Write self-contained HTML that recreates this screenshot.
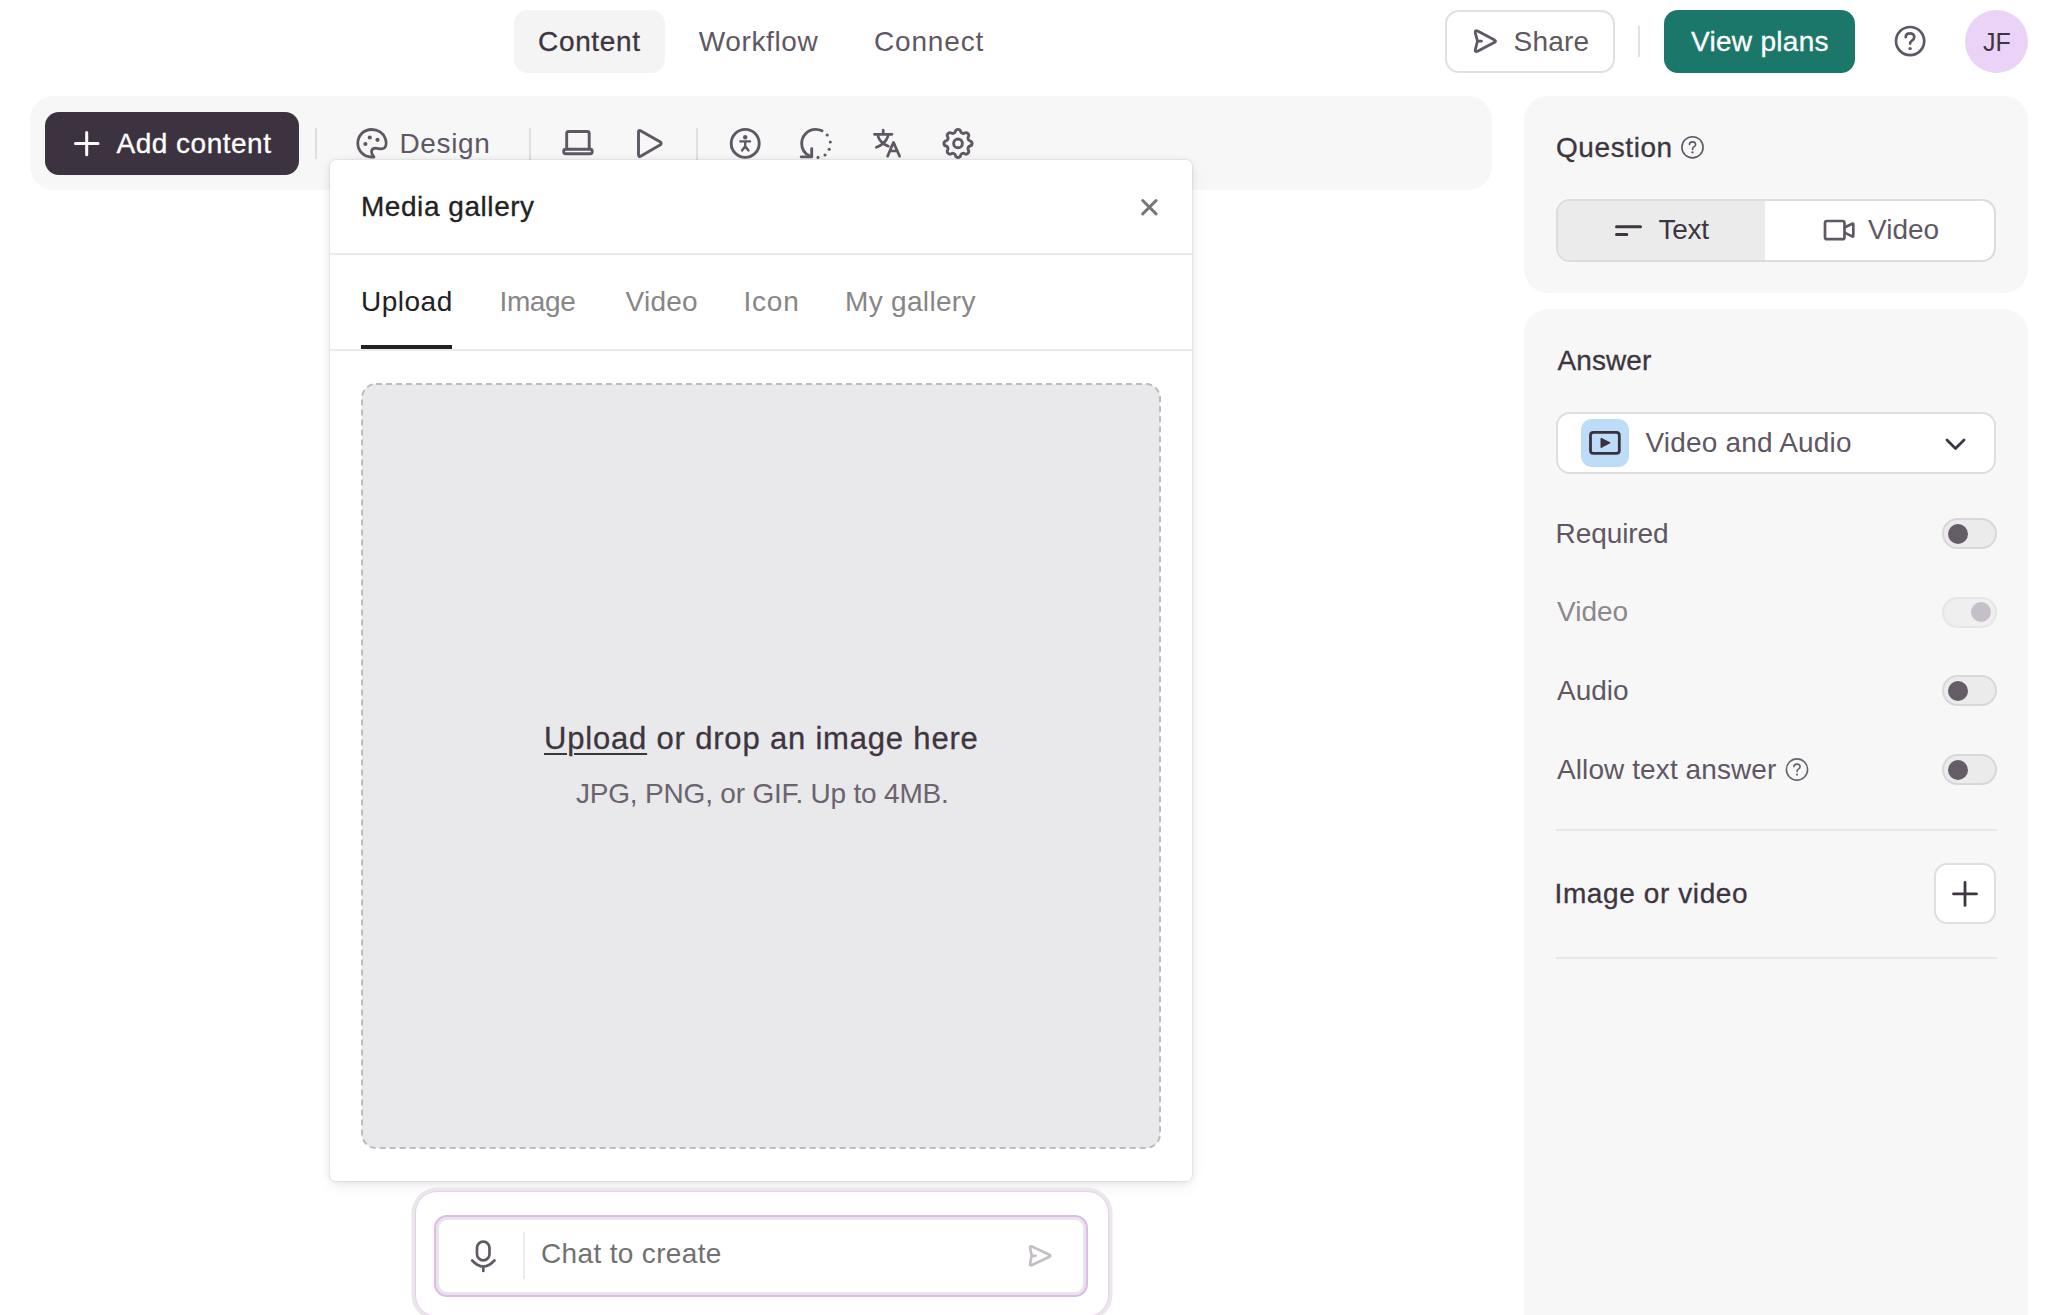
<!DOCTYPE html>
<html><head><meta charset="utf-8"><title>Media gallery</title>
<style>
html,body{margin:0;padding:0;background:#ffffff;}
body{width:2048px;height:1315px;position:relative;overflow:hidden;font-family:"Liberation Sans",sans-serif;}
body>div{position:absolute;}
.t{white-space:nowrap;}
</style></head><body>
<div style="left:514px;top:10px;width:151px;height:63px;background:#f4f4f4;border-radius:14px;"></div>
<div class="t" style="left:538.00px;top:27.59px;font-size:28px;line-height:28px;color:#3d3540;letter-spacing:0.667px;-webkit-text-stroke:0.3px #3d3540;">Content</div>
<div class="t" style="left:698.75px;top:27.59px;font-size:28px;line-height:28px;color:#5f5763;letter-spacing:0.609px;">Workflow</div>
<div class="t" style="left:874.00px;top:27.59px;font-size:28px;line-height:28px;color:#5f5763;letter-spacing:0.833px;">Connect</div>
<div style="left:1444.5px;top:10px;width:170.0px;height:63px;border:2px solid #e2dfe2;border-radius:14px;box-sizing:border-box;background:#fff;"></div>
<div class="t" style="left:1513.50px;top:27.59px;font-size:28px;line-height:28px;color:#5f5763;letter-spacing:0.2px;">Share</div>
<div style="left:1638px;top:25.5px;width:2px;height:31.5px;background:#e2e0e2;"></div>
<div style="left:1664px;top:10px;width:191px;height:63px;background:#1b776a;border-radius:14px;"></div>
<div class="t" style="left:1691.00px;top:27.79px;font-size:28px;line-height:28px;color:#ffffff;letter-spacing:0.3px;-webkit-text-stroke:0.3px #ffffff;">View plans</div>
<div style="left:1965px;top:10px;width:63px;height:63px;background:#ead3f7;border-radius:50%;"></div>
<div class="t" style="left:1983.00px;top:29.83px;font-size:25px;line-height:25px;color:#3d3540;">JF</div>
<div style="left:30px;top:96px;width:1462px;height:94px;background:#f7f7f7;border-radius:24px;"></div>
<div style="left:45px;top:112px;width:254px;height:63px;background:#3d3340;border-radius:14px;"></div>
<div class="t" style="left:116.50px;top:130.49px;font-size:28px;line-height:28px;color:#ffffff;letter-spacing:0.5px;-webkit-text-stroke:0.3px #ffffff;">Add content</div>
<div style="left:315px;top:128px;width:2px;height:31px;background:#e0dee0;"></div>
<div class="t" style="left:399.50px;top:130.49px;font-size:28px;line-height:28px;color:#5f5763;letter-spacing:0.65px;">Design</div>
<div style="left:529px;top:128px;width:2px;height:32px;background:#e0dee0;"></div>
<div style="left:696px;top:128px;width:2px;height:32px;background:#e0dee0;"></div>
<div style="left:1524px;top:96px;width:504px;height:197px;background:#f7f7f7;border-radius:24px;"></div>
<div class="t" style="left:1556.00px;top:134.09px;font-size:28px;line-height:28px;color:#3d3540;letter-spacing:0.586px;-webkit-text-stroke:0.3px #3d3540;">Question</div>
<div style="left:1556px;top:199px;width:440px;height:63px;border:2px solid #dddbdd;border-radius:14px;box-sizing:border-box;background:#fff;overflow:hidden;"></div>
<div style="left:1558px;top:201px;width:207px;height:59px;background:#ebebeb;border-radius:12px 0 0 12px;"></div>
<div class="t" style="left:1658.50px;top:216.09px;font-size:28px;line-height:28px;color:#3d3540;letter-spacing:-0.3px;">Text</div>
<div class="t" style="left:1868.00px;top:216.09px;font-size:28px;line-height:28px;color:#5f5763;">Video</div>
<div style="left:1524px;top:309px;width:504px;height:1031px;background:#f7f7f7;border-radius:24px;"></div>
<div class="t" style="left:1557.50px;top:346.59px;font-size:28px;line-height:28px;color:#3d3540;letter-spacing:0.1px;-webkit-text-stroke:0.3px #3d3540;">Answer</div>
<div style="left:1556px;top:412px;width:440px;height:62px;border:2px solid #dfdddf;border-radius:14px;box-sizing:border-box;background:#fff;"></div>
<div style="left:1581px;top:419px;width:48px;height:48px;background:#bddcf7;border-radius:11px;"></div>
<div class="t" style="left:1645.50px;top:429.19px;font-size:28px;line-height:28px;color:#5f5763;letter-spacing:0.179px;">Video and Audio</div>
<div class="t" style="left:1555.50px;top:519.59px;font-size:28px;line-height:28px;color:#5f5763;letter-spacing:-0.072px;">Required</div>
<div class="t" style="left:1557.00px;top:598.29px;font-size:28px;line-height:28px;color:#8c868e;">Video</div>
<div class="t" style="left:1557.00px;top:677.09px;font-size:28px;line-height:28px;color:#5f5763;">Audio</div>
<div class="t" style="left:1557.00px;top:755.79px;font-size:28px;line-height:28px;color:#5f5763;letter-spacing:0.093px;">Allow text answer</div>
<div style="left:1942px;top:518.0px;width:55px;height:31.0px;background:#ebebeb;border:2px solid #d9d7da;border-radius:16px;box-sizing:border-box;"></div>
<div style="left:1947.5px;top:523.5px;width:20.0px;height:20.0px;background:#645c67;border-radius:50%;"></div>
<div style="left:1942px;top:596.5px;width:55px;height:31.0px;background:#efefef;border:2px solid #e6e5e7;border-radius:16px;box-sizing:border-box;"></div>
<div style="left:1971px;top:602px;width:20px;height:20px;background:#c5c0c7;border-radius:50%;"></div>
<div style="left:1942px;top:675.0px;width:55px;height:31.0px;background:#ebebeb;border:2px solid #d9d7da;border-radius:16px;box-sizing:border-box;"></div>
<div style="left:1947.5px;top:680.5px;width:20.0px;height:20.0px;background:#645c67;border-radius:50%;"></div>
<div style="left:1942px;top:754.2px;width:55px;height:31.0px;background:#ebebeb;border:2px solid #d9d7da;border-radius:16px;box-sizing:border-box;"></div>
<div style="left:1947.5px;top:759.7px;width:20.0px;height:20.0px;background:#645c67;border-radius:50%;"></div>
<div style="left:1556px;top:829px;width:441px;height:2px;background:#e7e7e8;"></div>
<div class="t" style="left:1554.50px;top:879.99px;font-size:28px;line-height:28px;color:#3d3540;letter-spacing:0.607px;-webkit-text-stroke:0.3px #3d3540;">Image or video</div>
<div style="left:1934px;top:863px;width:62px;height:61px;border:2px solid #e0dee0;border-radius:13px;box-sizing:border-box;background:#fff;"></div>
<div style="left:1556px;top:956.5px;width:441px;height:2.0px;background:#e7e7e8;"></div>
<div style="left:330px;top:160px;width:862px;height:1020.5px;background:#fff;border-radius:6px;box-shadow:0 0 0 1px rgba(0,0,0,0.04),0 1px 7px rgba(0,0,0,0.085),0 5px 16px rgba(0,0,0,0.06);"></div>
<div class="t" style="left:361.00px;top:192.59px;font-size:28px;line-height:28px;color:#222222;letter-spacing:0.55px;-webkit-text-stroke:0.3px #222222;">Media gallery</div>
<div style="left:330px;top:253px;width:862px;height:2px;background:#ebebeb;"></div>
<div class="t" style="left:361.00px;top:288.29px;font-size:28px;line-height:28px;color:#222222;letter-spacing:0.5px;">Upload</div>
<div class="t" style="left:499.50px;top:288.29px;font-size:28px;line-height:28px;color:#868686;letter-spacing:-0.375px;">Image</div>
<div class="t" style="left:625.50px;top:288.29px;font-size:28px;line-height:28px;color:#868686;letter-spacing:0.25px;">Video</div>
<div class="t" style="left:743.50px;top:288.29px;font-size:28px;line-height:28px;color:#868686;letter-spacing:0.766px;">Icon</div>
<div class="t" style="left:845.00px;top:288.29px;font-size:28px;line-height:28px;color:#868686;letter-spacing:0.321px;">My gallery</div>
<div style="left:330px;top:349px;width:862px;height:2px;background:#ebebeb;"></div>
<div style="left:361px;top:345px;width:91px;height:4px;background:#222222;"></div>
<svg style="position:absolute;left:361px;top:383px" width="800" height="766"><rect x="1" y="1" width="798" height="764" rx="14" ry="14" fill="#e9e8ea" stroke="#bdbac0" stroke-width="2" stroke-dasharray="6 4"/></svg>
<div class="t" style="left:544.00px;top:723.05px;font-size:31px;line-height:31px;color:#3d3540;letter-spacing:0.813px;-webkit-text-stroke:0.3px #3d3540;"><span style="text-decoration:underline;text-decoration-thickness:2px;text-underline-offset:4px">Upload</span> or drop an image here</div>
<div class="t" style="left:576.00px;top:779.59px;font-size:28px;line-height:28px;color:#6b6470;letter-spacing:-0.194px;">JPG, PNG, or GIF. Up to 4MB.</div>
<div style="left:414.5px;top:1190.5px;width:694.0px;height:126.0px;background:#fff;border-radius:22px;border:1.8px solid #eccbf6;box-sizing:border-box;box-shadow:0 0 0 3.5px #e8e8e8;"></div>
<div style="left:436.2px;top:1217px;width:649.5999999999999px;height:77.79999999999995px;background:#fff;border-radius:11px;border:3.5px solid #e6e6e8;box-sizing:border-box;box-shadow:0 0 0 2px #dfb9ee;"></div>
<div style="left:523px;top:1232px;width:2px;height:47px;background:#ececec;"></div>
<div class="t" style="left:541.00px;top:1239.99px;font-size:28px;line-height:28px;color:#717171;letter-spacing:0.345px;">Chat to create</div>
<svg style="position:absolute;left:0;top:0;overflow:visible" width="2048" height="1315"><path d="M1477.5 41.2 L1475.3 32.8 Q1474.9 29.9 1477.6 31.1 L1494.6 40.1 Q1496.5 41.2 1494.6 42.3 L1477.6 51.3 Q1474.9 52.5 1475.3 49.6 Z M1477.5 41.2 H1481.5" fill="none" stroke="#5f5763" stroke-width="2.8" stroke-linecap="round" stroke-linejoin="round" /><circle cx="1910.1" cy="41.1" r="14.1" fill="none" stroke="#5f5763" stroke-width="2.7"/><path d="M1905.7 37.2 C1905.7 34.6 1907.7 33.3 1910 33.3 C1912.5 33.3 1914.3 34.9 1914.3 37.1 C1914.3 39.4 1912.6 40.2 1911.3 41.2 C1910.5 41.8 1910.1 42.5 1910.1 43.6" fill="none" stroke="#5f5763" stroke-width="2.7" stroke-linecap="round" stroke-linejoin="round" /><circle cx="1910.1" cy="48.6" r="1.7" fill="#5f5763"/><path d="M75.5 143.6 H98 M86.7 132.5 V154.8" fill="none" stroke="#ffffff" stroke-width="3.0" stroke-linecap="round" stroke-linejoin="round" /><path d="M374 157 C372.5 155 371.2 153.5 371.5 151.2 C372 148.5 374.5 148 377 148.3 C379.5 148.6 382.5 149.5 384.3 148 C386.5 146 386.3 141.5 385.3 138.5 C383.3 133 378 129.5 371.5 129.5 C363.5 129.5 357.8 135.8 357.8 143.3 C357.8 151 364 157 371.5 157 Z" fill="none" stroke="#5f5763" stroke-width="2.8" stroke-linecap="round" stroke-linejoin="round" /><circle cx="369.8" cy="137.5" r="2.1" fill="#5f5763"/><circle cx="377.5" cy="139.8" r="2.1" fill="#5f5763"/><circle cx="365.4" cy="144" r="2.1" fill="#5f5763"/><path d="M566.7 149 V133.5 Q566.7 131.5 568.7 131.5 H587.2 Q589.2 131.5 589.2 133.5 V149" fill="none" stroke="#5f5763" stroke-width="2.9" stroke-linecap="round" stroke-linejoin="round" /><path d="M565.7 149.3 H590.2 Q592.2 149.3 592.2 151.3 V151.7 Q592.2 153.7 590.2 153.7 H565.7 Q563.7 153.7 563.7 151.7 V151.3 Q563.7 149.3 565.7 149.3 Z" fill="none" stroke="#5f5763" stroke-width="2.9" stroke-linecap="round" stroke-linejoin="round" /><path d="M638.5 132.2 Q638.5 129.5 641 130.9 L660 141.8 Q662.3 143.4 660 145 L641 156 Q638.5 157.4 638.5 154.7 Z" fill="none" stroke="#5f5763" stroke-width="2.9" stroke-linecap="round" stroke-linejoin="round" /><circle cx="745.2" cy="143.4" r="14" fill="none" stroke="#5f5763" stroke-width="2.9"/><circle cx="745.2" cy="137.3" r="2.2" fill="#5f5763"/><path d="M740.4 141.4 H750 M745.2 141.4 V146.2 L742 150.4 M745.2 146.2 L748.5 150.4" fill="none" stroke="#5f5763" stroke-width="2.4" stroke-linecap="round" stroke-linejoin="round" /><path d="M822 130.8 C820 129.9 818 129.4 815.7 129.4 C808 129.4 801.7 135.6 801.7 143.4 C801.7 148.8 804.9 153.5 809.5 155.8" fill="none" stroke="#5f5763" stroke-width="2.9" stroke-linecap="round" stroke-linejoin="round" /><path d="M811.7 148.6 V156.9 H801.2" fill="none" stroke="#5f5763" stroke-width="2.9" stroke-linecap="round" stroke-linejoin="round" /><circle cx="827.2" cy="135" r="1.55" fill="#5f5763"/><circle cx="830.3" cy="142" r="1.55" fill="#5f5763"/><circle cx="829.2" cy="149.2" r="1.55" fill="#5f5763"/><circle cx="825" cy="155" r="1.55" fill="#5f5763"/><circle cx="818" cy="157.4" r="1.55" fill="#5f5763"/><path d="M874.4 134.3 H892 M883.2 130.2 V134 M878.2 136.7 C879.5 141 883.5 144.5 888.4 146.2 M887.9 136.4 C886 142 881.5 145.5 876.4 147.3" fill="none" stroke="#5f5763" stroke-width="2.7" stroke-linecap="round" stroke-linejoin="round" /><path d="M887.6 156.2 L893.5 142.4 L899.6 156.2 M889.8 151 H897.4" fill="none" stroke="#5f5763" stroke-width="2.7" stroke-linecap="round" stroke-linejoin="round" /><g transform="translate(939.28,124.68) scale(1.56)"><path d="M10.325 4.317c.426 -1.756 2.924 -1.756 3.35 0a1.724 1.724 0 0 0 2.573 1.066c1.543 -.94 3.31 .826 2.37 2.37a1.724 1.724 0 0 0 1.065 2.572c1.756 .426 1.756 2.924 0 3.35a1.724 1.724 0 0 0 -1.066 2.573c.94 1.543 -.826 3.31 -2.37 2.37a1.724 1.724 0 0 0 -2.572 1.065c-.426 1.756 -2.924 1.756 -3.35 0a1.724 1.724 0 0 0 -2.573 -1.066c-1.543 .94 -3.31 -.826 -2.37 -2.37a1.724 1.724 0 0 0 -1.065 -2.572c-1.756 -.426 -1.756 -2.924 0 -3.35a1.724 1.724 0 0 0 1.066 -2.573c-.94 -1.543 .826 -3.31 2.37 -2.37c1 .608 2.296 .07 2.572 -1.065z" fill="none" stroke="#5f5763" stroke-width="1.85" stroke-linejoin="round"/><circle cx="12" cy="12" r="2.8" fill="none" stroke="#5f5763" stroke-width="1.85"/></g><path d="M1142.7 200.5 L1156.1 213.9 M1156.1 200.5 L1142.7 213.9" fill="none" stroke="#777777" stroke-width="3.0" stroke-linecap="round" stroke-linejoin="round" /><circle cx="1692.5" cy="147.3" r="10.6" fill="none" stroke="#5f5763" stroke-width="1.6"/><path d="M1689.4 144.6 C1689.4 142.8 1690.8 141.9 1692.5 141.9 C1694.3 141.9 1695.6 143 1695.6 144.6 C1695.6 146.3 1693.9 146.7 1693.1 147.6 C1692.7 148 1692.5 148.5 1692.5 149.4" fill="none" stroke="#5f5763" stroke-width="1.6" stroke-linecap="round" stroke-linejoin="round" /><circle cx="1692.5" cy="152.4" r="1.1" fill="#5f5763"/><circle cx="1797" cy="769.5" r="10.6" fill="none" stroke="#6a636e" stroke-width="1.6"/><path d="M1793.9 766.8 C1793.9 765 1795.3 764.1 1797 764.1 C1798.8 764.1 1800.1 765.2 1800.1 766.8 C1800.1 768.5 1798.4 768.9 1797.6 769.8 C1797.2 770.2 1797 770.7 1797 771.6" fill="none" stroke="#6a636e" stroke-width="1.6" stroke-linecap="round" stroke-linejoin="round" /><circle cx="1797" cy="774.6" r="1.1" fill="#6a636e"/><path d="M1616.5 226.8 H1640.5 M1616.5 234.6 H1626.8" fill="none" stroke="#3d3540" stroke-width="3.0" stroke-linecap="round" stroke-linejoin="round" /><path d="M1827 221 H1842.5 Q1844.5 221 1844.5 223 V237.2 Q1844.5 239.2 1842.5 239.2 H1827 Q1825 239.2 1825 237.2 V223 Q1825 221 1827 221 Z" fill="none" stroke="#5f5763" stroke-width="2.7" stroke-linecap="round" stroke-linejoin="round" /><path d="M1845 227.3 L1852.2 223.8 Q1853.3 223.3 1853.3 224.5 V235.7 Q1853.3 236.9 1852.2 236.4 L1845 232.9" fill="none" stroke="#5f5763" stroke-width="2.7" stroke-linecap="round" stroke-linejoin="round" /><path d="M1593.5 432.4 H1616.3 Q1619.3 432.4 1619.3 435.4 V450.4 Q1619.3 453.4 1616.3 453.4 H1593.5 Q1590.5 453.4 1590.5 450.4 V435.4 Q1590.5 432.4 1593.5 432.4 Z" fill="none" stroke="#3a3140" stroke-width="2.8" stroke-linecap="round" stroke-linejoin="round" /><path d="M1601 438.2 L1610.1 442.8 L1601 447.6 Z" fill="#3a3140" stroke="#3a3140" stroke-width="1" stroke-linejoin="round"/><path d="M1947 440 L1955.5 448.5 L1964 440" fill="none" stroke="#3d3540" stroke-width="2.8" stroke-linecap="round" stroke-linejoin="round" /><path d="M1953.5 893.9 H1976.5 M1965 882.5 V905.4" fill="none" stroke="#3d3540" stroke-width="2.8" stroke-linecap="round" stroke-linejoin="round" /><path d="M483.25 1241.7 C486.7 1241.7 489.5 1244.5 489.5 1248 V1254 C489.5 1257.5 486.7 1260.3 483.25 1260.3 C479.8 1260.3 477 1257.5 477 1254 V1248 C477 1244.5 479.8 1241.7 483.25 1241.7 Z" fill="none" stroke="#5f5763" stroke-width="2.7" stroke-linecap="round" stroke-linejoin="round" /><path d="M472.2 1260.5 Q483.3 1272.6 494.4 1260.5 M483.3 1266.5 V1271" fill="none" stroke="#5f5763" stroke-width="2.7" stroke-linecap="round" stroke-linejoin="round" /><path d="M1031.7 1255.8 L1030.1 1248 Q1029.8 1245.5 1032.1 1246.6 L1049.4 1254.8 Q1051.2 1255.8 1049.4 1256.8 L1032.1 1265 Q1029.8 1266.1 1030.1 1263.6 Z M1031.7 1255.8 H1035.5" fill="none" stroke="#c2bec4" stroke-width="2.7" stroke-linecap="round" stroke-linejoin="round" /></svg>
</body></html>
